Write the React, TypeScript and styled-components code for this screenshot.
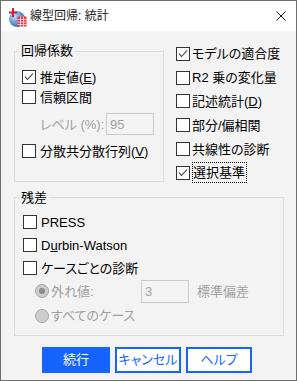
import React from "react";
import styled, { createGlobalStyle } from "styled-components";

const GlobalStyle = createGlobalStyle`
  html, body {
    margin: 0;
    padding: 0;
    background: #fff;
  }
  body {
    font-family: "Liberation Sans", "Noto Sans CJK JP", sans-serif;
    font-size: 13px;
    color: #000;
    font-feature-settings: "palt";
  }
`;

const BLUE = "#1664ff";
const DISABLED = "#a0a0a0";

function AppIcon() {
  return (
    <svg width="18" height="19" viewBox="0 0 18 19">
      <defs>
        <radialGradient id="ball" cx="35%" cy="35%" r="70%">
          <stop offset="0" stopColor="#b8dcf7" />
          <stop offset="1" stopColor="#2b6cb5" />
        </radialGradient>
      </defs>
      <circle cx="8" cy="11" r="8" fill="url(#ball)" />
      <rect x="3" y="0" width="2" height="9" fill="#d8202c" />
      <rect x="0" y="3.5" width="8" height="2" fill="#d8202c" />
      <rect x="8.5" y="8.5" width="9" height="10" fill="#e43a52" />
      <path
        d="M8.5 11.5h9M8.5 14h9M8.5 16.5h9M11.5 8.5v10M14.5 8.5v10"
        stroke="#fbe3e7"
        strokeWidth="0.8"
      />
    </svg>
  );
}

function CloseIcon() {
  return (
    <svg width="10" height="10" viewBox="0 0 10 10">
      <path d="M0.5 0.5l9 9M9.5 0.5l-9 9" stroke="#111" strokeWidth="1" />
    </svg>
  );
}

function CheckBox({ checked }: { checked?: boolean }) {
  return (
    <Box>
      {checked && (
        <svg width="12" height="12" viewBox="0 0 12 12">
          <polyline
            points="2,5.5 4.5,8.5 10,2.5"
            fill="none"
            stroke="#333"
            strokeWidth="1.1"
          />
        </svg>
      )}
    </Box>
  );
}

export default function App() {
  return (
    <>
      <GlobalStyle />
      <Window>
        <TitleBar>
          <AppIcon />
          <Title>線型回帰: 統計</Title>
          <CloseIcon />
        </TitleBar>
        <Body>
          <TopSection>
            <GroupBox $w={150} $h={138} $mt={3}>
              <Legend>回帰係数</Legend>
              <GroupInner $pt={9} $pl={7}>
                <CheckRow $h={20} $gap={4}>
                  <CheckBox checked />
                  <Label>
                    推定値(<Key>E</Key>)
                  </Label>
                </CheckRow>
                <CheckRow $h={20} $gap={4}>
                  <CheckBox />
                  <Label>信頼区間</Label>
                </CheckRow>
                <LevelRow>
                  <FieldLabel $w={66} $disabled>
                    レベル (%):
                  </FieldLabel>
                  <TextBox>95</TextBox>
                </LevelRow>
                <CheckRow $h={20} $gap={4} $mt={6}>
                  <CheckBox />
                  <Label>
                    分散共分散行列(<Key>V</Key>)
                  </Label>
                </CheckRow>
              </GroupInner>
            </GroupBox>
            <RightColumn>
              <CheckRow $h={23.8} $gap={2}>
                <CheckBox checked />
                <Label>モデルの適合度</Label>
              </CheckRow>
              <CheckRow $h={23.8} $gap={2}>
                <CheckBox />
                <Label>R2 乗の変化量</Label>
              </CheckRow>
              <CheckRow $h={23.8} $gap={2}>
                <CheckBox />
                <Label>
                  記述統計(<Key>D</Key>)
                </Label>
              </CheckRow>
              <CheckRow $h={23.8} $gap={2}>
                <CheckBox />
                <Label>部分/偏相関</Label>
              </CheckRow>
              <CheckRow $h={23.8} $gap={2}>
                <CheckBox />
                <Label>共線性の診断</Label>
              </CheckRow>
              <CheckRow $h={23.8} $gap={2}>
                <CheckBox checked />
                <FocusLabel>選択基準</FocusLabel>
              </CheckRow>
            </RightColumn>
          </TopSection>

          <GroupBox $w={270} $h={145} $mt={6}>
            <Legend>残差</Legend>
            <GroupInner $pt={6} $pl={8}>
              <CheckRow $h={23} $gap={4}>
                <CheckBox />
                <Label>PRESS</Label>
              </CheckRow>
              <CheckRow $h={23} $gap={4}>
                <CheckBox />
                <Label>
                  D<Key>u</Key>rbin-Watson
                </Label>
              </CheckRow>
              <CheckRow $h={23} $gap={4}>
                <CheckBox />
                <Label>ケースごとの診断</Label>
              </CheckRow>
              <RadioRow $h={23}>
                <Radio $checked />
                <FieldLabel $w={88} $disabled>
                  外れ値:
                </FieldLabel>
                <TextBox $h={23}>3</TextBox>
                <FieldLabel $disabled $ml={6}>
                  標準偏差
                </FieldLabel>
              </RadioRow>
              <RadioRow $h={26}>
                <Radio />
                <FieldLabel $disabled>すべてのケース</FieldLabel>
              </RadioRow>
            </GroupInner>
          </GroupBox>

          <ButtonBar>
            <Button $primary $w={68}>
              続行
            </Button>
            <Button $w={66}>キャンセル</Button>
            <Button $w={66}>ヘルプ</Button>
          </ButtonBar>
        </Body>
      </Window>
    </>
  );
}

const Window = styled.div`
  box-sizing: border-box;
  width: 297px;
  height: 381px;
  border: 1px solid #6e6e6e;
  background: #f3f3f3;
  display: flex;
  flex-direction: column;
  overflow: hidden;
`;

const TitleBar = styled.div`
  flex-shrink: 0;
  height: 30px;
  background: #fff;
  display: flex;
  align-items: center;
  padding: 0 10px 0 8px;

  svg:first-child {
    margin-top: 2px;
  }
`;

const Title = styled.div`
  flex: 1;
  margin-left: 3px;
  font-size: 12px;
  line-height: 16px;
  color: #1a1a1a;
`;

const Body = styled.div`
  display: flex;
  flex-direction: column;
  padding: 10px 13px 0 13px;
`;

const TopSection = styled.div`
  display: flex;
  align-items: flex-start;
`;

const GroupBox = styled.fieldset<{ $w: number; $h: number; $mt: number }>`
  box-sizing: border-box;
  width: ${(p) => p.$w}px;
  height: ${(p) => p.$h}px;
  margin: ${(p) => p.$mt}px 0 0 0;
  padding: 0;
  min-width: 0;
  border: 1px solid #dcdcdc;
`;

const Legend = styled.legend`
  margin-left: 4px;
  padding: 0 2px;
  font-size: 13px;
  line-height: 14px;
`;

const GroupInner = styled.div<{ $pt: number; $pl: number }>`
  display: flex;
  flex-direction: column;
  padding: ${(p) => p.$pt}px 0 0 ${(p) => p.$pl}px;
`;

const RightColumn = styled.div`
  display: flex;
  flex-direction: column;
  margin-left: 12px;
  padding-top: 1px;
`;

const CheckRow = styled.div<{ $h: number; $gap: number; $mt?: number }>`
  display: flex;
  align-items: center;
  height: ${(p) => p.$h}px;
  gap: ${(p) => p.$gap}px;
  margin-top: ${(p) => p.$mt ?? 0}px;
  white-space: nowrap;
`;

const Box = styled.span`
  box-sizing: border-box;
  flex-shrink: 0;
  width: 14px;
  height: 14px;
  border: 1px solid #333;
  background: #fff;
  display: flex;
  align-items: center;
  justify-content: center;
`;

const Label = styled.span`
  line-height: 17px;
`;

const FocusLabel = styled.span`
  line-height: 19px;
  border: 1px dotted #000;
  padding: 0 1px 0 0;
`;

const Key = styled.span`
  text-decoration: underline;
  text-underline-offset: 1px;
`;

const LevelRow = styled.div`
  display: flex;
  align-items: center;
  margin: 6px 0 0 18px;
`;

const FieldLabel = styled.span<{ $w?: number; $disabled?: boolean; $ml?: number }>`
  width: ${(p) => (p.$w ? `${p.$w}px` : "auto")};
  margin-left: ${(p) => p.$ml ?? 0}px;
  color: ${(p) => (p.$disabled ? DISABLED : "#000")};
  line-height: 17px;
  white-space: nowrap;
`;

const TextBox = styled.div<{ $h?: number }>`
  box-sizing: border-box;
  width: 48px;
  height: ${(p) => p.$h ?? 22}px;
  border: 1px solid #cccccc;
  background: #f3f3f3;
  color: ${DISABLED};
  padding-left: 3px;
  display: flex;
  align-items: center;
`;

const RadioRow = styled.div<{ $h: number }>`
  display: flex;
  align-items: center;
  height: ${(p) => p.$h}px;
  padding-left: 12px;
  gap: 2px;
`;

const Radio = styled.span<{ $checked?: boolean }>`
  box-sizing: border-box;
  flex-shrink: 0;
  width: 14px;
  height: 14px;
  border-radius: 50%;
  border: 1px solid #a4a4a4;
  background: #cdcdcd;
  display: flex;
  align-items: center;
  justify-content: center;

  &::after {
    content: "";
    display: ${(p) => (p.$checked ? "block" : "none")};
    width: 6px;
    height: 6px;
    border-radius: 50%;
    background: #8a8a8a;
  }
`;

const ButtonBar = styled.div`
  display: flex;
  gap: 5px;
  margin-top: 11px;
  padding-left: 28px;
`;

const Button = styled.div<{ $primary?: boolean; $w: number }>`
  box-sizing: border-box;
  width: ${(p) => p.$w}px;
  height: 26px;
  display: flex;
  align-items: center;
  justify-content: center;
  background: ${(p) => (p.$primary ? BLUE : "#fff")};
  color: ${(p) => (p.$primary ? "#fff" : BLUE)};
  border: 2px solid ${BLUE};
  font-size: 13px;
  line-height: 16px;
`;
